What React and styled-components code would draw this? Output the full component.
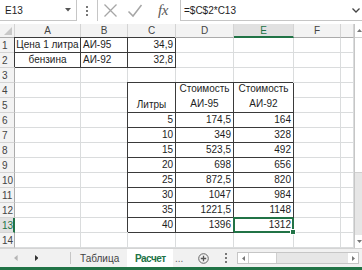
import React from 'react';
import styled, { createGlobalStyle, css } from 'styled-components';

const GREEN = '#217346';
const GRID = '#dadcdd';
const EDGE = '#3a3a3a';
const HEAD_BG = '#f3f3f3';

const GlobalStyle = createGlobalStyle`
    html, body {
        margin: 0;
        padding: 0;
        background: #fff;
    }
    body {
        font-family: "Liberation Sans", Arial, sans-serif;
        color: #1e1e1e;
    }
`;

const Window = styled.div`
    width: 362px;
    height: 270px;
    overflow: hidden;
    display: flex;
    flex-direction: column;
    background: #fff;
`;

/* ---------- formula bar ---------- */

const FormulaBar = styled.div`
    display: flex;
    height: 21px;
    margin-bottom: 3px;
`;

const NameBox = styled.div`
    width: 77px;
    box-sizing: border-box;
    border-right: 1px solid #c6c6c6;
    border-bottom: 1px solid #c6c6c6;
    display: flex;
    align-items: center;
    justify-content: space-between;
    padding: 0 5px 0 5px;
    font-size: 10px;
`;

const Handle = styled.div`
    width: 20px;
    display: flex;
    align-items: center;
    justify-content: center;
`;

const IconArea = styled.div`
    width: 83px;
    box-sizing: border-box;
    border-left: 1px solid #c6c6c6;
    display: flex;
    align-items: center;
    padding-left: 5px;
    gap: 9px;
`;

const Fx = styled.span`
    font-family: "Liberation Serif", "Times New Roman", serif;
    font-style: italic;
    font-size: 15px;
    color: #5a5a5a;
    margin-left: 6px;
    letter-spacing: -0.5px;
`;

const FormulaInput = styled.div`
    flex: 1;
    box-sizing: border-box;
    border-left: 1px solid #c6c6c6;
    border-bottom: 1px solid #c6c6c6;
    display: flex;
    align-items: center;
    justify-content: space-between;
    padding: 0 2px 0 3px;
    font-size: 10px;
`;

/* ---------- sheet ---------- */

const SheetArea = styled.div`
    display: flex;
    height: 224px;
`;

const Grid = styled.div`
    display: grid;
    grid-template-columns: 15px 66px 47px 48px 58px 60px 47px 13px;
    grid-template-rows: 14px;
    grid-auto-rows: 15px;
    width: 354px;
`;

const HeaderCell = styled.div`
    box-sizing: border-box;
    background: ${({ $active }) => ($active ? '#e1e1e1' : HEAD_BG)};
    border-right: 1px solid #d4d4d4;
    border-bottom: ${({ $active }) => ($active ? `2px solid ${GREEN}` : '1px solid #ababab')};
    color: ${({ $active }) => ($active ? GREEN : '#444')};
    font-size: 10px;
    display: flex;
    align-items: center;
    justify-content: center;
`;

const Corner = styled(HeaderCell)`
    align-items: flex-end;
    justify-content: flex-end;
    padding: 0 2px 2px 0;
`;

const RowHead = styled.div`
    box-sizing: border-box;
    background: ${({ $active }) => ($active ? '#e1e1e1' : HEAD_BG)};
    border-bottom: 1px solid #d4d4d4;
    border-right: ${({ $active }) => ($active ? `2px solid ${GREEN}` : '1px solid #ababab')};
    color: ${({ $active }) => ($active ? GREEN : '#444')};
    font-size: 10px;
    display: flex;
    align-items: flex-end;
    padding: 0 0 1px 2px;
`;

const Cell = styled.div`
    box-sizing: border-box;
    border-right: 1px solid ${GRID};
    border-bottom: 1px solid ${GRID};
    font-size: 10px;
    line-height: 13px;
    padding: 0 2px 1px 2px;
    display: flex;
    flex-direction: column;
    justify-content: flex-end;
    align-items: ${({ $align }) =>
        $align === 'right' ? 'flex-end' : $align === 'center' ? 'center' : 'flex-start'};
    white-space: nowrap;
    grid-row: ${({ $span }) => ($span ? `span ${$span}` : 'auto')};

    ${({ $boxed }) =>
        $boxed &&
        css`
            position: relative;
            z-index: 1;
            border-right-color: ${EDGE};
            border-bottom-color: ${EDGE};
            box-shadow: -1px -1px 0 ${EDGE};
        `}

    ${({ $selected }) =>
        $selected &&
        css`
            position: relative;
            z-index: 2;
            border-right-color: ${GREEN};
            border-bottom-color: ${GREEN};
            box-shadow: -1px -1px 0 ${GREEN}, inset 1px 1px 0 ${GREEN}, inset -1px -1px 0 ${GREEN};

            &::after {
                content: '';
                position: absolute;
                right: -3px;
                bottom: -3px;
                width: 4px;
                height: 4px;
                background: ${GREEN};
                border: 1px solid #fff;
            }
        `}
`;

const Line = styled.span`
    line-height: 15px;
`;

const VScroll = styled.div`
    width: 8px;
    box-sizing: border-box;
    border-left: 1px solid #c6c6c6;
    display: flex;
    flex-direction: column;
    background: #e6e6e6;
`;

const VArrow = styled.div`
    height: 13px;
    background: #fff;
    display: flex;
    align-items: center;
    justify-content: flex-end;
`;

const VThumb = styled.div`
    height: 134px;
    background: #fff;
    border-top: 1px solid #cfcfcf;
    border-bottom: 1px solid #cfcfcf;
`;

const VTrack = styled.div`
    flex: 1;
`;

/* ---------- tabs ---------- */

const TabBar = styled.div`
    height: 19px;
    box-sizing: border-box;
    border-top: 1px solid #d4d4d4;
    background: #f1f1f1;
    display: flex;
    align-items: stretch;
    font-size: 10px;
`;

const NavArrows = styled.div`
    width: 70px;
    display: flex;
    align-items: center;
    padding-left: 14px;
    gap: 17px;
    box-sizing: border-box;
`;

const Separator = styled.div`
    width: 1px;
    margin: 3px 0;
    background: #c6c6c6;
`;

const Tab = styled.div`
    width: ${({ $w }) => $w}px;
    box-sizing: border-box;
    padding-left: ${({ $active }) => ($active ? 8 : 9)}px;
    display: flex;
    align-items: center;
    white-space: nowrap;
    overflow: hidden;
    background: ${({ $active }) => ($active ? '#fff' : 'transparent')};
    color: ${({ $active }) => ($active ? GREEN : '#444')};
    font-weight: ${({ $active }) => ($active ? 'bold' : 'normal')};
    letter-spacing: ${({ $active }) => ($active ? '-0.5px' : '0')};
`;

const Ellipsis = styled.div`
    width: 16px;
    display: flex;
    align-items: center;
    padding-left: 2px;
    color: #666;
`;

const AddSheet = styled.div`
    width: 24px;
    display: flex;
    align-items: center;
    justify-content: center;
`;

const Dots = styled.div`
    width: 22px;
    display: flex;
    align-items: center;
    justify-content: center;
`;

const HScroll = styled.div`
    width: 122px;
    height: 12px;
    align-self: center;
    box-sizing: border-box;
    border: 1px solid #c6c6c6;
    background: #e6e6e6;
    display: flex;
`;

const HArrow = styled.div`
    width: 10px;
    background: #fff;
    display: flex;
    align-items: center;
    justify-content: center;
`;

const HThumb = styled.div`
    width: 27px;
    background: #fff;
    border-left: 1px solid #cfcfcf;
    border-right: 1px solid #cfcfcf;
`;

const HTrack = styled.div`
    flex: 1;
`;

const StatusStrip = styled.div`
    height: 3px;
    background: ${GREEN};
`;

/* ---------- icons ---------- */

const Triangle = ({ dir = 'down', color = '#555', size = 5 }) => {
    const pts = {
        down: `0,0 ${size},0 ${size / 2},${size * 0.6}`,
        up: `0,${size * 0.6} ${size},${size * 0.6} ${size / 2},0`,
        left: `${size * 0.6},0 ${size * 0.6},${size} 0,${size / 2}`,
        right: `0,0 0,${size} ${size * 0.6},${size / 2}`,
    }[dir];
    const w = dir === 'left' || dir === 'right' ? size * 0.6 : size;
    const h = dir === 'left' || dir === 'right' ? size : size * 0.6;
    return (
        <svg width={w} height={h} viewBox={`0 0 ${w} ${h}`}>
            <polygon points={pts} fill={color} />
        </svg>
    );
};

const VDots = () => (
    <svg width="2" height="10" viewBox="0 0 2 10">
        <rect x="0" y="0" width="2" height="2" fill="#777" />
        <rect x="0" y="4" width="2" height="2" fill="#777" />
        <rect x="0" y="8" width="2" height="2" fill="#777" />
    </svg>
);

const CrossIcon = () => (
    <svg width="15" height="15" viewBox="0 0 15 15">
        <path d="M1.5 1.5 L13.5 13.5 M13.5 1.5 L1.5 13.5" stroke="#a6a6a6" strokeWidth="1.3" fill="none" />
    </svg>
);

const CheckIcon = () => (
    <svg width="16" height="15" viewBox="0 0 16 15">
        <path d="M1.5 8.5 L6 13 L14.5 2" stroke="#a6a6a6" strokeWidth="1.5" fill="none" />
    </svg>
);

const Chevron = () => (
    <svg width="8" height="5" viewBox="0 0 8 5">
        <path d="M0.5 0.5 L4 4 L7.5 0.5" stroke="#444" strokeWidth="1.3" fill="none" />
    </svg>
);

const CornerMark = () => (
    <svg width="8" height="8" viewBox="0 0 8 8">
        <polygon points="8,0 8,8 0,8" fill="#c8c8c8" />
    </svg>
);

const PlusCircle = () => (
    <svg width="11" height="11" viewBox="0 0 11 11">
        <circle cx="5.5" cy="5.5" r="4.8" stroke="#666" strokeWidth="1" fill="none" />
        <path d="M5.5 2.8 V8.2 M2.8 5.5 H8.2" stroke="#555" strokeWidth="1.3" />
    </svg>
);

/* ---------- data ---------- */

const COLUMNS = ['A', 'B', 'C', 'D', 'E', 'F', ''];

const litres = [5, 10, 15, 20, 25, 30, 35, 40];
const ai95 = ['174,5', '349', '523,5', '698', '872,5', '1047', '1221,5', '1396'];
const ai92 = ['164', '328', '492', '656', '820', '984', '1148', '1312'];

const empty = () => ({});

const buildRows = () => {
    const rows = [];
    rows.push([
        { t: 'Цена 1 литра', align: 'center', boxed: true },
        { t: 'АИ-95', boxed: true },
        { t: '34,9', align: 'right', boxed: true },
        empty(), empty(), empty(), empty(),
    ]);
    rows.push([
        { t: 'бензина', align: 'center', boxed: true },
        { t: 'АИ-92', boxed: true },
        { t: '32,8', align: 'right', boxed: true },
        empty(), empty(), empty(), empty(),
    ]);
    rows.push(Array.from({ length: 7 }, empty));
    rows.push([
        empty(), empty(),
        { t: 'Литры', align: 'center', boxed: true, span: 2 },
        { lines: ['Стоимость', 'АИ-95'], align: 'center', boxed: true, span: 2 },
        { lines: ['Стоимость', 'АИ-92'], align: 'center', boxed: true, span: 2 },
        empty(), empty(),
    ]);
    rows.push([empty(), empty(), empty(), empty()]);
    litres.forEach((l, i) => {
        rows.push([
            empty(), empty(),
            { t: String(l), align: 'right', boxed: true },
            { t: ai95[i], align: 'right', boxed: true },
            { t: ai92[i], align: 'right', boxed: true, selected: i === litres.length - 1 },
            empty(), empty(),
        ]);
    });
    rows.push(Array.from({ length: 7 }, empty));
    return rows;
};

const ROWS = buildRows();

export default function App() {
    return (
        <>
            <GlobalStyle />
            <Window>
                <FormulaBar>
                    <NameBox>
                        <span>E13</span>
                        <Triangle dir="down" color="#555" size={6} />
                    </NameBox>
                    <Handle>
                        <VDots />
                    </Handle>
                    <IconArea>
                        <CrossIcon />
                        <CheckIcon />
                        <Fx>fx</Fx>
                    </IconArea>
                    <FormulaInput>
                        <span>=$C$2*C13</span>
                        <Chevron />
                    </FormulaInput>
                </FormulaBar>

                <SheetArea>
                    <Grid>
                        <Corner>
                            <CornerMark />
                        </Corner>
                        {COLUMNS.map((c, i) => (
                            <HeaderCell key={i} $active={c === 'E'}>
                                {c}
                            </HeaderCell>
                        ))}
                        {ROWS.map((cells, r) => (
                            <React.Fragment key={r}>
                                <RowHead $active={r === 12}>{r + 1}</RowHead>
                                {cells.map((cell, c) => (
                                    <Cell
                                        key={c}
                                        $align={cell.align}
                                        $boxed={cell.boxed && !cell.selected}
                                        $selected={cell.selected}
                                        $span={cell.span}
                                    >
                                        {cell.lines
                                            ? cell.lines.map((ln) => <Line key={ln}>{ln}</Line>)
                                            : cell.t}
                                    </Cell>
                                ))}
                            </React.Fragment>
                        ))}
                    </Grid>
                    <VScroll>
                        <VArrow>
                            <Triangle dir="up" color="#777" size={5} />
                        </VArrow>
                        <VThumb />
                        <VTrack />
                        <VArrow>
                            <Triangle dir="down" color="#777" size={5} />
                        </VArrow>
                    </VScroll>
                </SheetArea>

                <TabBar>
                    <NavArrows>
                        <Triangle dir="left" color="#b5b5b5" size={6} />
                        <Triangle dir="right" color="#333" size={6} />
                    </NavArrows>
                    <Separator />
                    <Tab $w={56}>Таблица</Tab>
                    <Tab $w={46} $active>
                        Расчет
                    </Tab>
                    <Ellipsis>...</Ellipsis>
                    <AddSheet>
                        <PlusCircle />
                    </AddSheet>
                    <Dots>
                        <VDots />
                    </Dots>
                    <HScroll>
                        <HArrow>
                            <Triangle dir="left" color="#777" size={5} />
                        </HArrow>
                        <HThumb />
                        <HTrack />
                        <HArrow>
                            <Triangle dir="right" color="#777" size={5} />
                        </HArrow>
                    </HScroll>
                </TabBar>
                <StatusStrip />
            </Window>
        </>
    );
}
